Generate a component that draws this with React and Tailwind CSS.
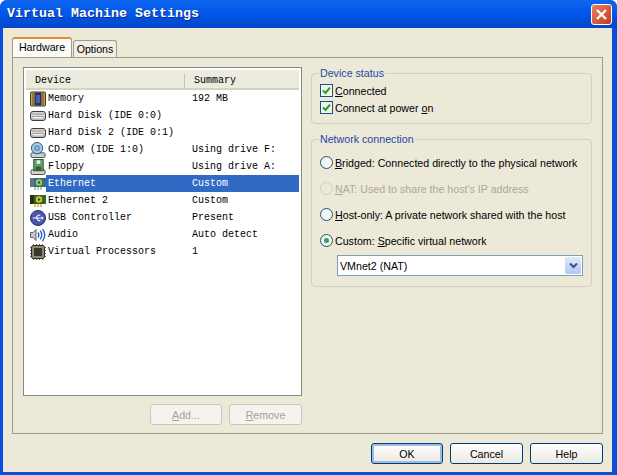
const Sans = "font-['Liberation_Sans',Arial,sans-serif]";

const Memory = () => (
  <svg width="16" height="16" viewBox="0 0 16 16">
    <rect x="0.5" y="1" width="15" height="14" rx="1" fill="#c9a24a" stroke="#4a3a18" />
    <path d="M2 3h2M2 5h2M2 7h2M2 9h2M2 11h2M2 13h2M12 3h2M12 5h2M12 7h2M12 9h2M12 11h2M12 13h2" stroke="#5a4314" strokeWidth="0.9" />
    <rect x="4.5" y="1.5" width="7" height="13" fill="#27306e" />
    <rect x="6" y="4" width="4" height="8" fill="#4a5bb0" />
  </svg>
);
const Disk = () => (
  <svg width="16" height="16" viewBox="0 0 16 16">
    <rect x="0.5" y="3.5" width="15" height="9" rx="2.5" fill="#d8d8d4" stroke="#3d3d3d" />
    <rect x="2" y="8.5" width="12" height="2.5" rx="1" fill="#f4f4f2" stroke="#77777a" strokeWidth="0.6" />
    <path d="M2 6h12" stroke="#9a9a9a" />
  </svg>
);
const Cd = () => (
  <svg width="16" height="16" viewBox="0 0 16 17">
    <rect x="0.5" y="11.5" width="15" height="5" rx="1.5" fill="#cfd3d6" stroke="#3d4a55" />
    <circle cx="7" cy="6.5" r="6" fill="#a8cdea" stroke="#27527c" />
    <circle cx="7" cy="6.5" r="3.4" fill="#6aa2d2" />
    <circle cx="7" cy="6.5" r="1.4" fill="#ffffff" stroke="#27527c" strokeWidth="0.6" />
    <path d="M13 14h1.5" stroke="#44cc77" />
  </svg>
);
const Floppy = () => (
  <svg width="16" height="16" viewBox="0 0 16 17">
    <rect x="0.5" y="11.5" width="15" height="5" rx="1.5" fill="#d5d5d0" stroke="#3f3f3f" />
    <rect x="3.5" y="0.5" width="10" height="12" fill="#67a467" stroke="#24512c" />
    <rect x="6" y="1" width="5" height="4.5" fill="#e6f0e6" stroke="#3a6c3f" strokeWidth="0.5" />
    <rect x="5.5" y="8" width="6" height="4" fill="#2f5f38" />
  </svg>
);
const Eth = ({ sel }) => (
  <svg width="16" height="14" viewBox="0 0 16 14">
    <rect x="0" y="1" width="16" height="9" fill={sel ? "#3c6c78" : "#2f6a1a"} />
    <rect x="0" y="1" width="4" height="9" fill={sel ? "#5a7488" : "#26300f"} />
    <circle cx="9" cy="5.5" r="3.2" fill={sel ? "#a8c66a" : "#d8c23a"} />
    <circle cx="9" cy="5.5" r="1.3" fill="#2d5020" />
    <path d="M5 10v3M8 10v3M11 10v3" stroke={sel ? "#7f9ea8" : "#c8a020"} strokeWidth="1.2" />
  </svg>
);
const Usb = () => (
  <svg width="16" height="16" viewBox="0 0 17 17">
    <circle cx="8.5" cy="8.5" r="8" fill="#4a55b0" stroke="#23286a" />
    <path d="M3 8.5h10M6 8.5l2.5-3h2.5M7 8.5l2 2.8h2" stroke="#ffffff" strokeWidth="1.1" fill="none" />
    <path d="M12.5 6.5l2 2-2 2z" fill="#ffffff" />
  </svg>
);
const Audio = () => (
  <svg width="16" height="16" viewBox="0 0 16 16">
    <path d="M0.5 5.5h2.5l3-3v11l-3-3H0.5z" fill="#c5c8cf" stroke="#40424f" strokeWidth="0.8" />
    <path d="M8 5.5q1.6 2.5 0 5M10.2 3.6q3 4.4 0 8.8M12.5 1.8q4.4 6.2 0 12.4" stroke="#2461cf" strokeWidth="1.4" fill="none" />
  </svg>
);
const Cpu = () => (
  <svg width="16" height="16" viewBox="0 0 16 16">
    <path d="M3.5 0v16M6.5 0v16M9.5 0v16M12.5 0v16M0 3.5h16M0 6.5h16M0 9.5h16M0 12.5h16" stroke="#5c5340" strokeWidth="0.9" />
    <rect x="1.5" y="1.5" width="13" height="13" rx="2" fill="#8d8a78" stroke="#2d2b22" />
    <rect x="4" y="4" width="8" height="8" fill="#3a372b" />
  </svg>
);

const rows = [
  [Memory, "Memory", "192 MB"],
  [Disk, "Hard Disk (IDE 0:0)", ""],
  [Disk, "Hard Disk 2 (IDE 0:1)", ""],
  [Cd, "CD-ROM (IDE 1:0)", "Using drive F:"],
  [Floppy, "Floppy", "Using drive A:"],
  [Eth, "Ethernet", "Custom", true],
  [Eth, "Ethernet 2", "Custom"],
  [Usb, "USB Controller", "Present"],
  [Audio, "Audio", "Auto detect"],
  [Cpu, "Virtual Processors", "1"],
];

const U = ({ children }) => <span className="underline underline-offset-1">{children}</span>;

const Check = ({ children }) => (
  <div className="flex items-center gap-[2px] h-[13px]">
    <span className="w-[13px] h-[13px] shrink-0 border border-[#1c5180] bg-[#f4f4ee] flex items-center justify-center">
      <svg width="9" height="9" viewBox="0 0 9 9">
        <path d="M1 4.5l2.5 2.5L8 1.7" stroke="#21a121" strokeWidth="2" fill="none" />
      </svg>
    </span>
    <span className="text-black whitespace-nowrap">{children}</span>
  </div>
);

const Radio = ({ children, on, off }) => (
  <div className="flex items-center gap-[2px] h-[13px]">
    <span className={`w-[13px] h-[13px] shrink-0 rounded-full border flex items-center justify-center ${off ? "border-[#cfcfc4] bg-[#ece9d8]" : "border-[#1c5180] bg-[#f6f6f0]"}`}>
      {on && <span className="w-[5px] h-[5px] rounded-full bg-[#2fa84a]" />}
    </span>
    <span className={`whitespace-nowrap ${off ? "text-[#aca899]" : "text-black"}`}>{children}</span>
  </div>
);

const Btn = ({ children, w, def }) => (
  <button className={`h-[21px] ${w} rounded-[3px] border border-[#003c74] bg-gradient-to-b from-white to-[#ece9e0] text-black text-[10.67px] ${def ? "shadow-[inset_0_0_0_2px_#9dbbe8]" : ""}`}>
    {children}
  </button>
);

const BtnOff = ({ children, w }) => (
  <button className={`h-[21px] ${w} rounded-[3px] border border-[#c9c7ba] bg-[#f4f3ee] text-[#a5a295] text-[10.67px]`}>
    {children}
  </button>
);

export default function App() {
  return (
    <div className={`w-[617px] h-[475px] flex flex-col bg-[#0a4fdc] rounded-t-[7px] overflow-hidden text-[10.67px] ${Sans}`}>
      <div className="h-[28px] shrink-0 flex items-center justify-between pl-[7px] pr-[5px] bg-gradient-to-b from-[#0d66ee] via-[#0355ea] to-[#0246c8]">
        <span className="font-['Liberation_Mono',monospace] font-bold text-[13.33px] text-white [text-shadow:1px_1px_0_#0a2a80]">Virtual Machine Settings</span>
        <span className="w-[21px] h-[21px] rounded-[3px] border border-white bg-gradient-to-br from-[#e8805e] to-[#c23a17] flex items-center justify-center">
          <svg width="13" height="13" viewBox="0 0 13 13">
            <path d="M2 2l9 9M11 2l-9 9" stroke="#ffffff" strokeWidth="2.4" />
          </svg>
        </span>
      </div>

      <div className="flex-1 ml-[3px] mb-[3px] mr-[5px] bg-[#ece9d8] flex flex-col pl-[9px] pr-[9px] pt-[9px]">
        <div className="flex items-end h-[20px] relative z-10">
          <div className="w-[60px] h-[20px] pb-[2px] bg-[#fbfbf8] border border-[#9c9b8c] border-b-0 border-t-[2px] border-t-[#e68b2c] rounded-t-[3px] flex items-center justify-center text-black">Hardware</div>
          <div className="w-[44px] h-[17px] ml-[1px] bg-[#f1efe4] border border-[#9c9b8c] border-b-0 rounded-t-[3px] flex items-center justify-center text-black">Options</div>
        </div>

        <div className="h-[377px] border border-[#9c9b8c] bg-[#ece9d8] flex pl-[10px] pr-[9px] pt-[9px]">
          <div className="w-[279px] shrink-0 flex flex-col">
            <div className="h-[329px] border border-[#8a8a80] bg-white p-[2px] flex flex-col font-['Liberation_Mono',monospace] text-[10px] text-black">
              <div className="h-[20px] shrink-0 flex items-end bg-[#ecebe0] border-b-2 border-[#d6d2c2]">
                <div className="w-[159px] h-[14px] pl-[9px] border-r border-[#c7c5b2] leading-[14px]">Device</div>
                <div className="pl-[9px] leading-[14px]">Summary</div>
              </div>
              <div className="flex flex-col">
                {rows.map(([Icon, name, sum, sel], i) => (
                  <div key={i} className="h-[17px] flex items-center">
                    <div className="w-[20px] shrink-0 flex items-center justify-center pl-[4px]">
                      <Icon sel={sel} />
                    </div>
                    <div className={`flex-1 h-[17px] flex items-center ${sel ? "bg-[#316ac5] text-white" : ""}`}>
                      <div className="w-[146px] shrink-0 pl-[2px]">{name}</div>
                      <div>{sum}</div>
                    </div>
                  </div>
                ))}
              </div>
            </div>
            <div className="flex justify-end gap-[7px] mt-[8px]">
              <BtnOff w="w-[72px]"><U>A</U>dd...</BtnOff>
              <BtnOff w="w-[73px]"><U>R</U>emove</BtnOff>
            </div>
          </div>

          <div className="w-[281px] ml-[9px] flex flex-col">
            <fieldset className="h-[57px] border border-[#d0d0bf] rounded-[4px] pl-[8px]">
              <legend className="-ml-[1px] px-[1px] text-[#1f46a8] leading-[13px]">Device status</legend>
              <div className="flex flex-col gap-[4px] pt-[4px]">
                <Check><U>C</U>onnected</Check>
                <Check>Connect at power <U>o</U>n</Check>
              </div>
            </fieldset>
            <fieldset className="h-[154px] mt-[9px] border border-[#d0d0bf] rounded-[4px] pl-[8px]">
              <legend className="-ml-[1px] px-[1px] text-[#1f46a8] leading-[13px]">Network connection</legend>
              <div className="flex flex-col gap-[13px] pt-[10px]">
                <Radio><U>B</U>ridged: Connected directly to the physical network</Radio>
                <Radio off><U>N</U>AT: Used to share the host's IP address</Radio>
                <Radio><U>H</U>ost-only: A private network shared with the host</Radio>
                <Radio on>Custom: <U>S</U>pecific virtual network</Radio>
              </div>
              <div className="w-[246px] h-[21px] ml-[17px] mt-[8px] border border-[#7f9db9] bg-white flex items-center justify-between pl-[2px] pr-[1px] text-black">
                <span>VMnet2 (NAT)</span>
                <span className="w-[16px] h-[17px] rounded-[2px] bg-gradient-to-b from-[#dfe9fb] to-[#b2c8f2] flex items-center justify-center">
                  <svg width="9" height="7" viewBox="0 0 9 7">
                    <path d="M1 1.5l3.5 3.5L8 1.5" stroke="#33508e" strokeWidth="2" fill="none" />
                  </svg>
                </span>
              </div>
            </fieldset>
          </div>
        </div>

        <div className="flex justify-end gap-[7px] mt-[9px]">
          <Btn w="w-[72px]" def>OK</Btn>
          <Btn w="w-[73px]">Cancel</Btn>
          <Btn w="w-[73px]">Help</Btn>
        </div>
      </div>
    </div>
  );
}
